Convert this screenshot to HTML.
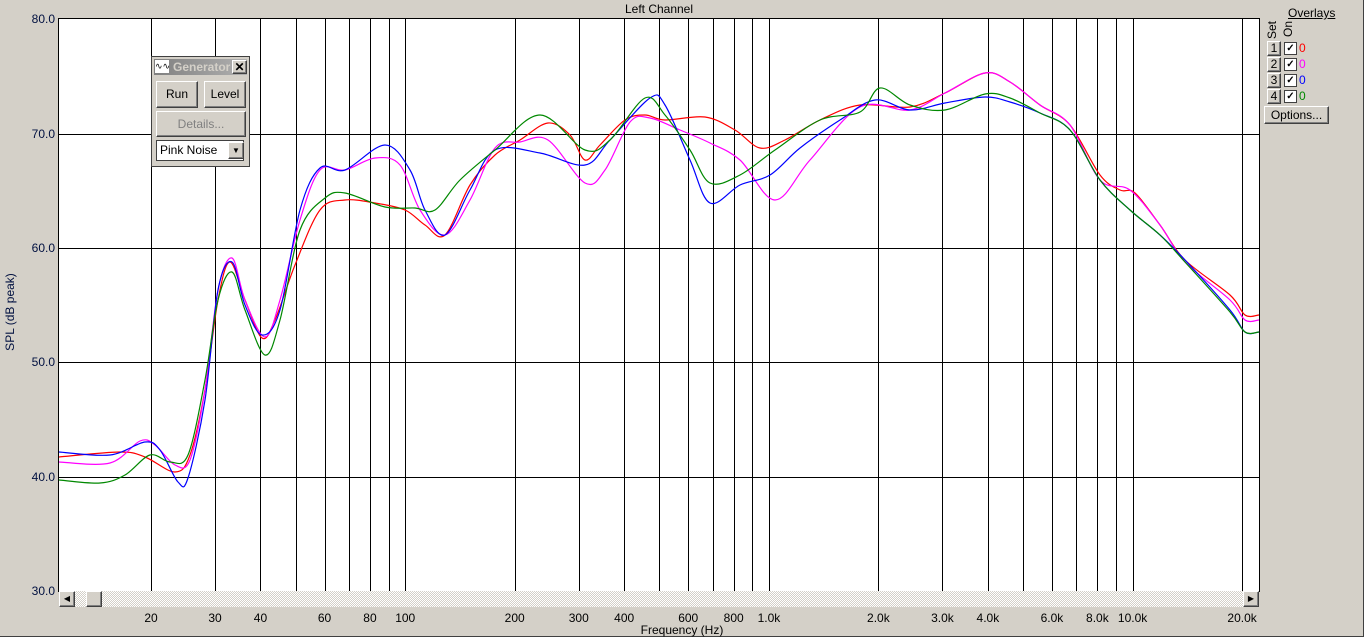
<!DOCTYPE html>
<html><head><meta charset="utf-8"><style>
body{margin:0;width:1364px;height:637px;background:#d4d0c8;font-family:"Liberation Sans",sans-serif;font-size:12px;position:relative;overflow:hidden}
.a{position:absolute}
.btn{position:absolute;background:#d4d0c8;border:1px solid;border-color:#fff #404040 #404040 #fff;box-shadow:inset -1px -1px #808080;text-align:center;font-size:12px;color:#000}
.yl{position:absolute;right:1309px;color:#001040;font-size:12px}
.xl{position:absolute;top:611px;font-size:12px;color:#000;transform:translateX(-50%)}
</style></head><body>
<div class="a" style="left:0;top:0;width:1363px;height:636px;border-right:1px solid #404040;border-bottom:1px solid #404040"></div>
<div class="a" style="left:0;top:2px;width:1260px;text-align:center;padding-left:58px;box-sizing:border-box">Left Channel</div>
<svg class="a" style="left:0;top:0" width="1364" height="637" id="s">
<rect x="58.5" y="18.5" width="1201" height="573" fill="#fff" stroke="#000"/>
<g id="grid" stroke="#000" stroke-width="1"></g>
<g id="curves" fill="none" stroke-width="1.2"></g>
</svg>
<div class="yl" style="top:12px">80.0</div>
<div class="yl" style="top:127px">70.0</div>
<div class="yl" style="top:241px">60.0</div>
<div class="yl" style="top:355px">50.0</div>
<div class="yl" style="top:470px">40.0</div>
<div class="yl" style="top:584px">30.0</div>
<div class="a" style="left:-30px;top:305px;width:80px;transform:rotate(-90deg);text-align:center;color:#001040;white-space:nowrap">SPL (dB peak)</div>
<!-- scrollbar -->
<div class="a" style="left:59px;top:591px;width:1200px;height:16px;background:repeating-conic-gradient(#d4d0c8 0 25%,#fff 0 50%) 0 0/2px 2px"></div>
<div class="btn" style="left:59px;top:591px;width:14px;height:14px;line-height:14px;font-size:8px">◀</div>
<div class="btn" style="left:86px;top:591px;width:14px;height:14px"></div>
<div class="btn" style="left:1243px;top:591px;width:14px;height:14px;line-height:14px;font-size:8px">▶</div>
<div id="xl"></div>
<div class="a" style="left:0;top:623px;width:1364px;text-align:center">Frequency (Hz)</div>
<!-- generator -->
<div class="a" style="left:151px;top:56px;width:99px;height:111px;background:#d4d0c8;border:1px solid #404040;box-sizing:border-box">
<div class="a" style="left:2px;top:2px;width:93px;height:16px;background:linear-gradient(90deg,#808080,#b0b0b0)"></div>
<div class="a" style="left:3px;top:3px;width:14px;height:13px;background:#fff;font-size:9px;line-height:13px;text-align:center">∿∿</div>
<div class="a" style="left:21px;top:3px;color:#d4d0c8;font-weight:bold;font-size:12px">Generator</div>
<div class="btn" style="left:80px;top:3px;width:13px;height:12px;line-height:12px;font-size:12px;font-weight:bold">✕</div>
<div class="btn" style="left:4px;top:24px;width:40px;height:25px;line-height:25px">Run</div>
<div class="btn" style="left:52px;top:24px;width:40px;height:25px;line-height:25px">Level</div>
<div class="btn" style="left:4px;top:54px;width:88px;height:24px;line-height:24px;color:#808080">Details...</div>
<div class="a" style="left:4px;top:83px;width:88px;height:21px;background:#fff;border:1px solid #404040;box-sizing:border-box;line-height:19px;padding-left:3px">Pink Noise</div>
<div class="btn" style="left:76px;top:85px;width:14px;height:15px;line-height:15px;font-size:8px">▼</div>
</div>
<!-- overlays -->
<div class="a" style="left:1288px;top:6px;text-decoration:underline">Overlays</div>
<div class="a" style="left:1265px;top:24px;transform:rotate(-90deg);transform-origin:0 0;font-size:12px;top:39px">Set</div>
<div class="a" style="left:1281px;top:37px;transform:rotate(-90deg);transform-origin:0 0">On</div>
<div id="ov"></div>
<div class="btn" style="left:1264px;top:106px;width:63px;height:16px;line-height:16px">Options...</div>
<script>
var X=f=>151+363.7*Math.log10(f/20);
var g=document.getElementById('grid'),h='';
[20,30,40,50,60,70,80,90,100,200,300,400,500,600,700,800,900,1000,2000,3000,4000,5000,6000,7000,8000,9000,10000,20000].forEach(f=>{var x=Math.round(X(f))+.5;h+='<line x1="'+x+'" y1="19" x2="'+x+'" y2="591"/>'});
[134,248,362,477].forEach(y=>{h+='<line x1="59" y1="'+(y+.5)+'" x2="1259" y2="'+(y+.5)+'"/>'});
g.innerHTML=h;
var xl='';[[20,'20'],[30,'30'],[40,'40'],[60,'60'],[80,'80'],[100,'100'],[200,'200'],[300,'300'],[400,'400'],[600,'600'],[800,'800'],[1000,'1.0k'],[2000,'2.0k'],[3000,'3.0k'],[4000,'4.0k'],[6000,'6.0k'],[8000,'8.0k'],[10000,'10.0k'],[20000,'20.0k']].forEach(a=>{xl+='<div class="xl" style="left:'+X(a[0])+'px">'+a[1]+'</div>'});
document.getElementById('xl').innerHTML=xl;
var ov='',cols=['#f00','#f0f','#00f','#080'];
for(var i=0;i<4;i++){var t=41+i*16;ov+='<div class="btn" style="left:1267px;top:'+t+'px;width:12px;height:13px;line-height:13px">'+(i+1)+'</div><div class="a" style="left:1284px;top:'+(t+1)+'px;width:11px;height:11px;background:#fff;border:1px solid #404040;font-size:10px;line-height:11px;text-align:center;font-weight:bold">✓</div><div class="a" style="left:1299px;top:'+t+'px;color:'+cols[i]+'">0</div>';}
document.getElementById('ov').innerHTML=ov;
var D={
'#f00':[[59,457],[120,452],[145,457],[175,472],[190,455],[205,390],[218,300],[230,262],[245,300],[262,338],[275,320],[295,265],[320,210],[345,200],[375,203],[405,210],[425,225],[445,235],[470,185],[495,155],[520,140],[548,123],[570,135],[585,160],[600,145],[625,120],[645,115],[665,120],[705,117],[735,130],[760,148],[785,140],[820,120],[860,105],[910,107],[945,93],[985,73],[1010,82],[1040,105],[1070,125],[1100,175],[1120,190],[1135,193],[1160,225],[1185,260],[1230,295],[1245,315],[1259,315]],
'#f0f':[[59,462],[110,463],[140,441],[155,445],[175,465],[190,460],[205,390],[218,290],[232,258],[245,300],[265,337],[280,300],[300,220],[320,170],[345,170],[375,158],[400,165],[420,210],[445,235],[470,200],[495,148],[520,142],[548,140],[585,183],[605,170],[630,122],[650,118],[680,130],[710,143],[740,160],[775,200],[810,160],[860,107],[910,110],[945,93],[985,73],[1010,82],[1040,105],[1070,125],[1100,180],[1130,190],[1160,225],[1185,262],[1230,300],[1245,320],[1259,320]],
'#00f':[[59,452],[110,455],[145,442],[160,450],[178,482],[188,478],[205,400],[218,290],[232,262],[245,305],[262,335],[280,310],[300,210],[320,168],[345,170],[385,145],[410,170],[425,210],[445,235],[470,190],[495,150],[540,153],[585,165],[610,140],[650,98],[665,105],[690,160],[710,203],[740,185],[770,175],[800,148],[840,120],[875,100],[910,110],[945,103],[985,97],[1010,102],[1040,113],[1070,130],[1100,180],[1130,210],[1160,235],[1185,260],[1230,310],[1245,332],[1259,332]],
'#080':[[59,480],[100,483],[125,475],[150,455],[170,462],[188,455],[205,380],[218,300],[232,272],[245,310],[265,355],[280,320],[300,230],[325,198],[345,193],[385,207],[415,208],[435,210],[460,180],[495,150],[540,115],[585,150],[610,140],[645,98],[665,115],[690,150],[710,183],[740,175],[775,150],[820,120],[860,112],[880,88],[910,105],[945,110],[985,94],[1010,98],[1040,113],[1070,130],[1100,180],[1130,210],[1160,235],[1185,262],[1230,312],[1245,332],[1259,332]]};
var c='';
for(var k in D){var p=D[k],d='M'+p[0][0]+','+p[0][1];
for(var i=0;i<p.length-1;i++){var p0=p[Math.max(0,i-1)],p1=p[i],p2=p[i+1],p3=p[Math.min(p.length-1,i+2)];
d+='C'+(p1[0]+(p2[0]-p0[0])/6)+','+(p1[1]+(p2[1]-p0[1])/6)+' '+(p2[0]-(p3[0]-p1[0])/6)+','+(p2[1]-(p3[1]-p1[1])/6)+' '+p2[0]+','+p2[1];}
c+='<path stroke="'+k+'" d="'+d+'"/>';}
document.getElementById('curves').innerHTML=c;
</script>
</body></html>
